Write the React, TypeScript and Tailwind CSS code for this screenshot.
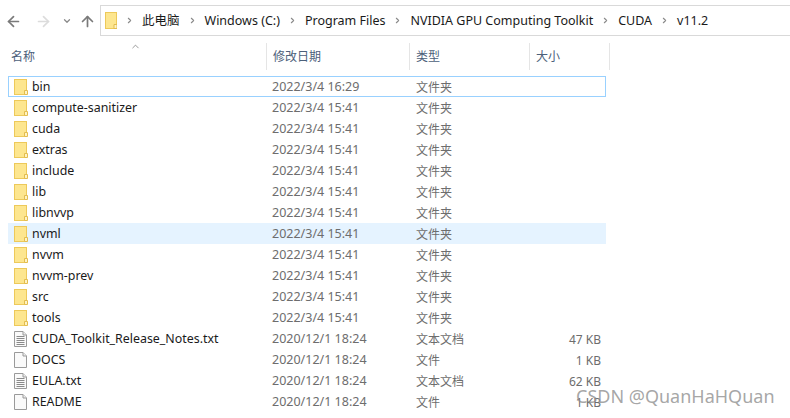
import { ArrowLeft, ArrowRight, ArrowUp, ChevronDown, ChevronRight } from "lucide-react";

const crumbs = ["此电脑", "Windows (C:)", "Program Files", "NVIDIA GPU Computing Toolkit", "CUDA", "v11.2"];

const files = [
  { name: "bin", date: "2022/3/4 16:29", type: "文件夹", size: "", icon: "folder", state: "focus" },
  { name: "compute-sanitizer", date: "2022/3/4 15:41", type: "文件夹", size: "", icon: "folder" },
  { name: "cuda", date: "2022/3/4 15:41", type: "文件夹", size: "", icon: "folder" },
  { name: "extras", date: "2022/3/4 15:41", type: "文件夹", size: "", icon: "folder" },
  { name: "include", date: "2022/3/4 15:41", type: "文件夹", size: "", icon: "folder" },
  { name: "lib", date: "2022/3/4 15:41", type: "文件夹", size: "", icon: "folder" },
  { name: "libnvvp", date: "2022/3/4 15:41", type: "文件夹", size: "", icon: "folder" },
  { name: "nvml", date: "2022/3/4 15:41", type: "文件夹", size: "", icon: "folder", state: "hover" },
  { name: "nvvm", date: "2022/3/4 15:41", type: "文件夹", size: "", icon: "folder" },
  { name: "nvvm-prev", date: "2022/3/4 15:41", type: "文件夹", size: "", icon: "folder" },
  { name: "src", date: "2022/3/4 15:41", type: "文件夹", size: "", icon: "folder" },
  { name: "tools", date: "2022/3/4 15:41", type: "文件夹", size: "", icon: "folder" },
  { name: "CUDA_Toolkit_Release_Notes.txt", date: "2020/12/1 18:24", type: "文本文档", size: "47 KB", icon: "text" },
  { name: "DOCS", date: "2020/12/1 18:24", type: "文件", size: "1 KB", icon: "file" },
  { name: "EULA.txt", date: "2020/12/1 18:24", type: "文本文档", size: "62 KB", icon: "text" },
  { name: "README", date: "2020/12/1 18:24", type: "文件", size: "1 KB", icon: "file" },
];

const FolderIcon = () => (
  <svg width="14" height="16" viewBox="0 0 14 16" className="shrink-0">
    <rect x="0.5" y="0.5" width="12" height="15" fill="#fde68f" stroke="#edc95a" />
    <path d="M10.5 15.5V11.5H13.5V15.5Z" fill="#fff3c4" stroke="#e3bd4f" />
  </svg>
);

const DocIcon = ({ lines }: { lines: boolean }) => (
  <svg width="13" height="16" viewBox="0 0 13 16" className="shrink-0">
    <path d="M0.5 0.5H9L12.5 4V15.5H0.5Z" fill="#fafafa" stroke="#9a9a9a" />
    <path d="M9 0.5V4H12.5" fill="#eee" stroke="#9a9a9a" />
    {lines && <path d="M2.5 5.5H10.5M2.5 7.5H10.5M2.5 9.5H10.5M2.5 11.5H10.5M2.5 13.5H10.5" stroke="#8a8a8a" />}
  </svg>
);

const rowStyle = (state?: string) => {
  if (state === "focus") return "border border-[#99d1ff]";
  if (state === "hover") return "bg-[#e5f3ff] border border-[#e5f3ff]";
  return "border border-transparent";
};

export default function App() {
  return (
    <div
      className="relative w-[790px] h-[418px] overflow-hidden bg-white text-[12px] leading-none"
      style={{ fontFamily: '"Noto Sans", "Noto Sans CJK SC", sans-serif' }}
    >
      {/* toolbar */}
      <div className="flex items-center h-[31px] mt-[5px]">
        <div className="flex items-center w-[100px] shrink-0 pt-[1px]">
          <ArrowLeft size={17} strokeWidth={2.4} className="ml-[5px] text-[#7a7a7a]" />
          <ArrowRight size={17} strokeWidth={2.4} className="ml-[13px] text-[#dcdcdc]" />
          <ChevronDown size={10} strokeWidth={3} className="ml-[10px] text-[#8a8a8a]" />
          <ArrowUp size={17} strokeWidth={2.4} className="ml-[7px] text-[#7a7a7a]" />
        </div>
        <div className="flex items-center flex-1 h-[31px] pl-[4px] border border-r-0 border-[#d9d9d9] text-[#1a1a1a] text-[12.5px]">
          <svg width="12" height="17" viewBox="0 0 12 17" className="shrink-0">
            <rect x="0.5" y="0.5" width="11" height="16" fill="#fde68f" stroke="#edc95a" />
            <path d="M9 16.5V12.5H12V16.5Z" fill="#fff3c4" stroke="#e3bd4f" />
          </svg>
          {crumbs.map((crumb) => (
            <div key={crumb} className="flex items-center whitespace-nowrap">
              <ChevronRight size={9} strokeWidth={3} className="mx-[8px] text-[#8a8a8a]" />
              <span className="pt-[2px]">{crumb}</span>
            </div>
          ))}
        </div>
      </div>

      {/* column headers */}
      <div className="relative flex h-[27px] mt-[7px] text-[#4c607a] text-[12px]">
        <ChevronDown size={11} strokeWidth={1.5} className="absolute left-[130px] top-[-2px] rotate-180 text-[#6d6d6d]" />
        <div className="flex items-center w-[267px] pl-[11px] border-r border-[#e5e5e5]">名称</div>
        <div className="flex items-center w-[143px] pl-[6px] border-r border-[#e5e5e5]">修改日期</div>
        <div className="flex items-center w-[120px] pl-[6px] border-r border-[#e5e5e5]">类型</div>
        <div className="flex items-center w-[80px] pl-[6px] border-r border-[#e5e5e5]">大小</div>
      </div>

      {/* rows */}
      <div className="flex flex-col mt-[6px] ml-[8px] w-[598px]">
        {files.map((file) => (
          <div key={file.name} className={`flex items-center h-[21px] ${rowStyle(file.state)}`}>
            <div className="flex items-center w-[263px] shrink-0 pl-[5px]">
              <div className="flex w-[18px] shrink-0">
                {file.icon === "folder" ? <FolderIcon /> : <DocIcon lines={file.icon === "text"} />}
              </div>
              <span className="pt-[2px] text-[#1a1a1a] text-[12.4px] whitespace-nowrap">{file.name}</span>
            </div>
            <div className="w-[144px] shrink-0 pt-[2px] text-[#6d6d6d] text-[12.5px] whitespace-nowrap">{file.date}</div>
            <div className="w-[100px] shrink-0 pt-[2px] text-[#6d6d6d]">{file.type}</div>
            <div className="w-[85px] shrink-0 pt-[2px] text-right text-[#6d6d6d] whitespace-nowrap">{file.size}</div>
          </div>
        ))}
      </div>

      {/* watermark */}
      <div className="absolute left-[576px] top-[387px] text-[18px] text-[#8f8f8f]/80 whitespace-nowrap">
        CSDN @QuanHaHQuan
      </div>
    </div>
  );
}
